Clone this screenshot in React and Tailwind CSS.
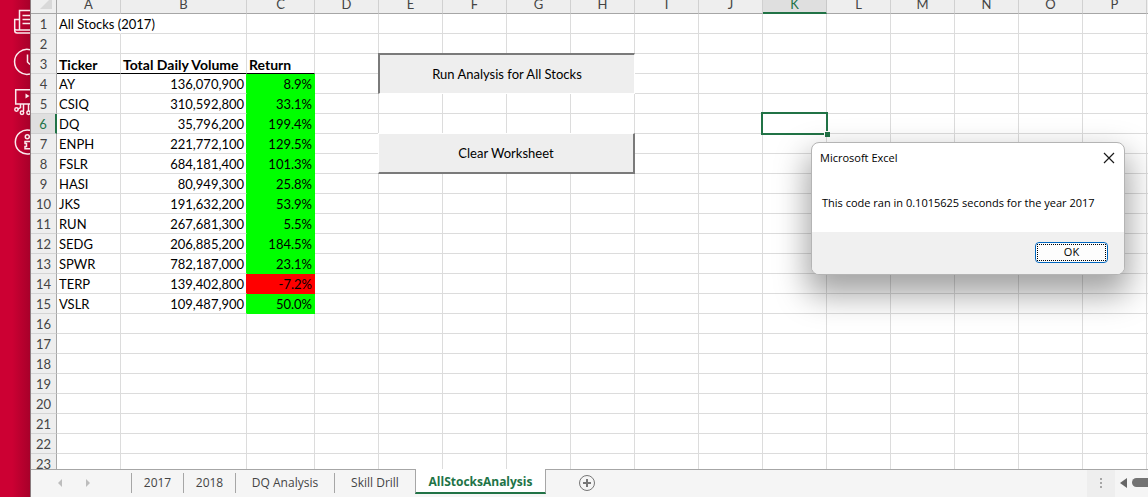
import React from "react";

const COLUMNS = "ABCDEFGHIJKLMNOP".split("");
const ROW_COUNT = 23;
const ACTIVE = { column: "K", row: 6 };

const STOCKS = [
  ["AY", "136,070,900", "8.9%"],
  ["CSIQ", "310,592,800", "33.1%"],
  ["DQ", "35,796,200", "199.4%"],
  ["ENPH", "221,772,100", "129.5%"],
  ["FSLR", "684,181,400", "101.3%"],
  ["HASI", "80,949,300", "25.8%"],
  ["JKS", "191,632,200", "53.9%"],
  ["RUN", "267,681,300", "5.5%"],
  ["SEDG", "206,885,200", "184.5%"],
  ["SPWR", "782,187,000", "23.1%"],
  ["TERP", "139,402,800", "-7.2%"],
  ["VSLR", "109,487,900", "50.0%"],
];

const SHEETS = ["2017", "2018", "DQ Analysis", "Skill Drill"];

function SideRail() {
  return (
    <aside className="w-[31px] shrink-0 border-r border-[#8a7a7d] bg-linear-to-r from-[#cc0033] from-40% to-[#a8002a]">
      <svg width="30" height="160" viewBox="0 0 30 160" fill="none" stroke="#fbeaee" strokeWidth="1.500" aria-hidden="true">
        <path d="M30 10.500H19.500V29.500M19.500 19.500H14.700V30.500q0 2.500 2.500 2.500H30M14.700 28.500q0 1.500 2 1.500H30M22.500 15.500H30M22.500 19.500H30M22.500 23.500H30" />
        <path d="M30 49.700A12.500 12.500 0 1 0 30 74M27.500 54.500V62L30 64.500" />
        <path d="M30 89.700H15.700V104H30M20.500 104V107.500L17.500 109.500M23.500 104V111M28.500 104V111" />
        <path d="M25.500 93.500V98.500L29.500 96Z" fill="#fbeaee" stroke="none" />
        <circle cx="16.500" cy="109.500" r="1.700" />
        <circle cx="22" cy="112.700" r="1.700" />
        <circle cx="28.500" cy="112.700" r="1.700" />
        <path d="M30 130.300A12 12 0 1 0 30 153.700" />
        <circle cx="27.300" cy="136.800" r="2" />
        <path d="M30 141.500H25V143.500H26.500V146.500H25V148.700H30" />
      </svg>
    </aside>
  );
}

function cellContent(column, row) {
  if (row === 1 && column === "A") return "All Stocks (2017)";
  if (row === 3) return { A: "Ticker", B: "Total Daily Volume", C: "Return" }[column];
  const stock = STOCKS[row - 4];
  return stock && stock["ABC".indexOf(column)];
}

function fillOf(row) {
  const stock = STOCKS[row - 4];
  if (!stock) return null;
  return stock[2].startsWith("-") ? "red" : "green";
}

function cellClass(column, row) {
  const fill = fillOf(row);
  const classes = ["relative h-5 whitespace-nowrap border-r border-b p-0 pt-[2px] leading-[17px]"];
  if (column === "C" && fill) {
    classes.push(fill === "red" ? "border-[#ff0000] bg-[#ff0000]" : "border-[#00ff00] bg-[#00ff00]");
  } else if (column === "B" && fill) {
    classes.push("border-b-[#dcdcdc]", fill === "red" ? "border-r-[#ff0000]" : "border-r-[#00ff00]");
  } else if (row === 3 && "ABC".includes(column)) {
    classes.push("border-r-[#dcdcdc] border-b-black text-[14px] font-bold");
  } else if (row === 1 && column === "A") {
    classes.push("border-r-white border-b-[#dcdcdc]");
  } else {
    classes.push("border-[#dcdcdc]");
  }
  classes.push(fill && column !== "A" ? "pr-[2px] text-right" : "pl-[2px] text-left");
  return classes.join(" ");
}

function Grid() {
  return (
    <table className="w-full table-fixed border-separate border-spacing-0 text-[13px] text-black">
      <colgroup>
        <col className="w-[26px]" />
        {COLUMNS.map((c) => (
          <col key={c} className={c === "B" ? "w-[126px]" : c === "C" ? "w-[68px]" : "w-[64px]"} />
        ))}
        <col />
      </colgroup>
      <thead>
        <tr className="bg-[#eeeeee] text-[#444444]">
          <td className="border-r border-b border-[#a6a6a6] p-0">
            <svg className="ml-auto block" width="16" height="13" viewBox="0 0 16 13" aria-hidden="true">
              <path d="M12 0V9H0L9 0Z" fill="#d8d8d8" />
            </svg>
          </td>
          {COLUMNS.map((c) => (
            <th
              key={c}
              scope="col"
              className={
                c === ACTIVE.column
                  ? "border-r border-b-2 border-r-[#c8c8c8] border-b-[#217346] bg-[#dfdfdf] p-0 font-normal text-[#217346]"
                  : "border-r border-b border-r-[#d0d0d0] border-b-[#a6a6a6] p-0 font-normal"
              }
            >
              <div className={c === ACTIVE.column ? "flex h-3 items-end justify-center overflow-hidden" : "flex h-[13px] items-end justify-center overflow-hidden"}>
                <span className={c === ACTIVE.column ? "leading-[15px]" : "leading-[17px]"}>{c}</span>
              </div>
            </th>
          ))}
          <td className="border-b border-[#a6a6a6] p-0" />
        </tr>
      </thead>
      <tbody>
        {Array.from({ length: ROW_COUNT }, (_, i) => i + 1).map((row) => (
          <tr key={row}>
            <th
              scope="row"
              className={
                row === ACTIVE.row
                  ? "h-5 border-r-2 border-b border-r-[#217346] border-b-[#d0d0d0] bg-[#dfdfdf] p-0 pt-[2px] text-center leading-[17px] font-normal text-[#217346]"
                  : "h-5 border-r border-b border-r-[#a6a6a6] border-b-[#d4d4d4] bg-[#eeeeee] p-0 pt-[2px] text-center leading-[17px] font-normal text-[#444444]"
              }
            >
              {row}
            </th>
            {COLUMNS.map((c) => (
              <td key={c} className={cellClass(c, row)}>
                {cellContent(c, row)}
                {c === ACTIVE.column && row === ACTIVE.row && (
                  <span className="absolute -inset-[2px] z-10 border-2 border-[#217346]">
                    <span className="absolute -right-[4px] -bottom-[4px] size-[6px] border-t border-l border-white bg-[#217346]" />
                  </span>
                )}
              </td>
            ))}
            <td className="border-b border-[#dcdcdc] p-0" />
          </tr>
        ))}
      </tbody>
    </table>
  );
}

function MessageBox() {
  return (
    <div
      role="dialog"
      aria-labelledby="box-title"
      className="absolute top-[142px] left-[780px] z-20 flex w-[314px] flex-col overflow-hidden rounded-lg border border-[#b4b4b4] bg-white font-['Open_Sans','Noto_Sans',sans-serif] text-[11px] text-black shadow-[0_16px_32px_4px_rgba(0,0,0,0.36)]"
    >
      <div className="flex h-[30px] items-center justify-between px-2">
        <h2 id="box-title">Microsoft Excel</h2>
        <button type="button" aria-label="Close" className="p-[1px]">
          <svg width="12" height="12" viewBox="0 0 12 12" stroke="#1a1a1a" strokeWidth="1.200" aria-hidden="true">
            <path d="M1 1L11 11M11 1L1 11" />
          </svg>
        </button>
      </div>
      <p className="h-[59px] pt-[22px] pl-[10px] leading-4 whitespace-nowrap">
        This code ran in 0.1015625 seconds for the year 2017
      </p>
      <div className="flex h-[42px] items-center justify-end bg-[#f0f0f0] pr-4 pb-[2px]">
        <button type="button" className="h-[21px] w-[73px] rounded border border-[#0067c0] bg-[#fdfdfd] p-[1px]">
          <span className="flex h-full items-center justify-center border border-dotted border-black">OK</span>
        </button>
      </div>
    </div>
  );
}

function TabBar() {
  return (
    <nav aria-label="Sheets" className="flex h-7 shrink-0 bg-[#f5f5f5] font-['Open_Sans','Noto_Sans',sans-serif] text-[12px] text-[#444444]">
      <div className="flex w-[100px] gap-[22px] border-t border-[#a6a6a6] pt-[9px] pl-[26px]">
        <button type="button" aria-label="Previous sheet" className="h-2 w-[6px]">
          <svg width="6" height="8" aria-hidden="true"><path d="M5 0V8L1 4Z" fill="#bdbdbd" /></svg>
        </button>
        <button type="button" aria-label="Next sheet" className="h-2 w-[6px]">
          <svg width="6" height="8" aria-hidden="true"><path d="M1 0V8L5 4Z" fill="#bdbdbd" /></svg>
        </button>
      </div>
      <div className="flex border-t border-[#a6a6a6] pt-[3px]">
        {SHEETS.map((name) => (
          <button
            key={name}
            type="button"
            className={
              name === "DQ Analysis"
                ? "h-5 w-[99px] border-l border-[#a6a6a6]"
                : name === "Skill Drill"
                ? "h-5 w-[81px] border-l border-[#a6a6a6]"
                : "h-5 w-[52px] border-l border-[#a6a6a6]"
            }
          >
            {name}
          </button>
        ))}
      </div>
      <button type="button" aria-current="page" className="h-[25px] w-[131px] border-x border-b-2 border-x-[#a6a6a6] border-b-[#217346] bg-white pt-[3px] font-bold text-[#217346]">
        AllStocksAnalysis
      </button>
      <div className="flex flex-1 border-t border-[#a6a6a6] pt-1 pl-8">
        <button type="button" aria-label="New sheet" className="size-[18px]">
          <svg width="18" height="18" viewBox="0 0 18 18" fill="none" stroke="#777777" aria-hidden="true">
            <circle cx="9" cy="9" r="7.500" />
            <path d="M9 5V13M5 9H13" strokeWidth="2" />
          </svg>
        </button>
      </div>
      <div className="flex w-[61px] border-t border-[#a6a6a6]">
        <div className="flex w-7 justify-center bg-[#eeeeee] pt-2">
          <svg width="2" height="11" fill="#a6a6a6" aria-hidden="true">
            <path d="M0 0H2V2H0ZM0 4H2V6H0ZM0 8H2V10H0Z" />
          </svg>
        </div>
        <button type="button" aria-label="Scroll left" className="h-[26px] w-[17px] pl-1">
          <svg width="9" height="10" aria-hidden="true"><path d="M8 0V10L1 5Z" fill="#666666" /></svg>
        </button>
        <div className="mt-2 h-[9px] flex-1 rounded-l-full bg-[#737373]" />
      </div>
    </nav>
  );
}

export default function App() {
  return (
    <div className="flex h-screen overflow-hidden bg-white font-['Lato','Noto_Sans',sans-serif]">
      <SideRail />
      <main className="flex min-w-0 flex-1 flex-col">
        <div className="relative min-h-0 flex-1 overflow-hidden">
          <Grid />
          <button type="button" className="absolute top-[53px] left-[347px] h-[41px] w-[257px] border-t-2 border-r border-b border-l-2 border-t-[#7a7a7a] border-r-white border-b-white border-l-[#7a7a7a] bg-[#eeeeee] pt-[2px] text-[13px]">
            Run Analysis for All Stocks
          </button>
          <button type="button" className="absolute top-[133px] left-[347px] h-[41px] w-[257px] border-t border-r-2 border-b-2 border-l border-t-white border-r-[#7a7a7a] border-b-[#7a7a7a] border-l-white bg-[#eeeeee] pt-[2px] text-[13px]">
            Clear Worksheet
          </button>
          <MessageBox />
        </div>
        <TabBar />
      </main>
    </div>
  );
}
